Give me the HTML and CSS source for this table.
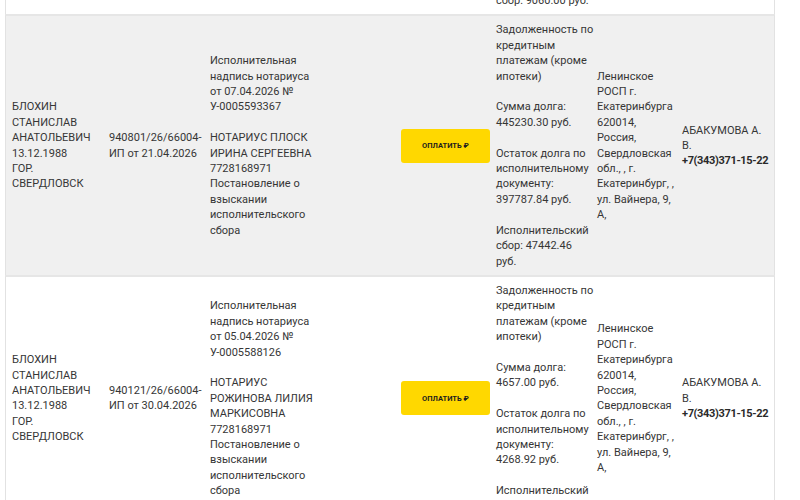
FILE: index.html
```html
<!DOCTYPE html>
<html lang="ru">
<head>
<meta charset="utf-8">
<link rel="stylesheet" href="styles.css">
<title>Задолженности</title>
</head>
<body>
<div class="viewport">
<table class="debts">
  <colgroup>
    <col class="c-name"><col class="c-ip"><col class="c-doc"><col class="c-pay"><col class="c-sum"><col class="c-dept"><col class="c-bailiff">
  </colgroup>
  <tbody>
    <tr class="row row-white row-prev">
      <td class="name"></td><td></td><td></td><td></td>
      <td>сбор: 9060.00 руб.</td>
      <td class="dept"></td><td class="bailiff"></td>
    </tr>
    <tr class="row row-gray">
      <td class="name">БЛОХИН СТАНИСЛАВ АНАТОЛЬЕВИЧ<br>13.12.1988<br>ГОР. СВЕРДЛОВСК</td>
      <td>940801/26/66004-ИП от 21.04.2026</td>
      <td><div class="doc">Исполнительная надпись нотариуса от 07.04.2026 № У-0005593367<br><br>НОТАРИУС ПЛОСК ИРИНА СЕРГЕЕВНА<br>7728168971<br>Постановление о взыскании исполнительского сбора</div></td>
      <td><button class="pay">ОПЛАТИТЬ ₽</button></td>
      <td>Задолженность по кредитным платежам (кроме ипотеки)<br><br>Сумма долга: 445230.30 руб.<br><br>Остаток долга по исполнительному документу: 397787.84 руб.<br><br>Исполнительский сбор: 47442.46 руб.</td>
      <td class="dept">Ленинское РОСП г. Екатеринбурга 620014, Россия, Свердловская обл., , г. Екатеринбург, , ул. Вайнера, 9, А,</td>
      <td class="bailiff">АБАКУМОВА А. В.<br><b class="phone">+7(343)371-15-22</b></td>
    </tr>
    <tr class="row row-white">
      <td class="name">БЛОХИН СТАНИСЛАВ АНАТОЛЬЕВИЧ<br>13.12.1988<br>ГОР. СВЕРДЛОВСК</td>
      <td>940121/26/66004-ИП от 30.04.2026</td>
      <td><div class="doc">Исполнительная надпись нотариуса от 05.04.2026 № У-0005588126<br><br>НОТАРИУС РОЖИНОВА ЛИЛИЯ МАРКИСОВНА<br>7728168971<br>Постановление о взыскании исполнительского сбора</div></td>
      <td><button class="pay">ОПЛАТИТЬ ₽</button></td>
      <td>Задолженность по кредитным платежам (кроме ипотеки)<br><br>Сумма долга: 4657.00 руб.<br><br>Остаток долга по исполнительному документу: 4268.92 руб.<br><br>Исполнительский сбор: 288.00 руб.</td>
      <td class="dept">Ленинское РОСП г. Екатеринбурга 620014, Россия, Свердловская обл., , г. Екатеринбург, , ул. Вайнера, 9, А,</td>
      <td class="bailiff">АБАКУМОВА А. В.<br><b class="phone">+7(343)371-15-22</b></td>
    </tr>
  </tbody>
</table>
</div>
</body>
</html>
```
FILE: styles.css
```css
html, body {
  margin: 0;
  padding: 0;
  background: #ffffff;
}
body {
  font-family: Roboto, "Liberation Sans", sans-serif;
  font-size: 11px;
  line-height: 15.4px;
  color: #363636;
}
.viewport {
  height: 500px;
  overflow: hidden;
  padding-left: 5px;
}
.debts {
  margin-top: -13px;
  width: 770px;
  table-layout: fixed;
  border-collapse: separate;
  border-spacing: 0;
}
.c-name { width: 98px; }
.c-ip { width: 101px; }
.c-doc { width: 191px; }
.c-pay { width: 95px; }
.c-sum { width: 104px; }
.c-dept { width: 82px; }
.c-bailiff { width: 99px; }

.debts td {
  padding: 6px 0 6px 6px;
  vertical-align: middle;
  border-top: 2px solid #e6e6e6;
}
.debts td.name {
  border-left: 1px solid #e2e2e2;
  padding-right: 8px;
}
.debts td.dept {
  padding-left: 3px;
}
.debts td.bailiff {
  border-right: 1px solid #e2e2e2;
  padding-right: 4px;
}
.row-prev td {
  border-top: 0;
}
.row-gray td {
  background: #f0f0f0;
}
.row-white td {
  background: #ffffff;
}
.doc {
  width: 108px;
}
.phone {
  font-weight: 700;
  color: #2a2a2a;
  white-space: nowrap;
  letter-spacing: -0.35px;
}
.pay {
  display: block;
  width: 89px;
  height: 34px;
  border: 0;
  border-radius: 3px;
  background: #ffd800;
  color: #1e1e1e;
  font-family: Roboto, "Liberation Sans", sans-serif;
  font-size: 7.5px;
  font-weight: 700;
  padding: 0;
  cursor: pointer;
}
```
